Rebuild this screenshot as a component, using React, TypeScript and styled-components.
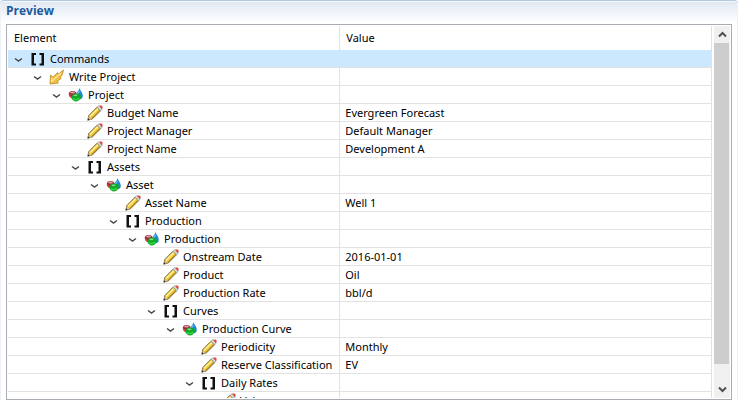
import React from 'react';
import styled, { createGlobalStyle } from 'styled-components';

const Global = createGlobalStyle`
  * { box-sizing: border-box; }
  body { margin: 0; background: #fff; color: #000; font: 11px/18px "Noto Sans", "Open Sans", sans-serif; }
`;

const Panel = styled.section`
  display: flex;
  flex-direction: column;
  height: 100vh;
  padding: 0 6px;
  border-top: 1px solid #b4c8e0;
  border-radius: 4px 4px 0 0;
  background: linear-gradient(#dfe8f2, #fff 22px);
  box-shadow: inset 1px 0 #eef2f7, inset -1px 0 #eef2f7, inset 0 1px #f5f9ff;
`;

const Title = styled.h2`
  margin: 0;
  padding-top: 1px;
  height: 23px;
  font-family: "Open Sans", sans-serif;
  font-size: 12px;
  line-height: 18px;
  font-weight: 700;
  color: #1c5a9c;
`;

const Viewer = styled.div`
  display: flex;
  flex: 1;
  min-height: 0;
  padding: 1px;
  border: 1px solid #a9acb2;
  background: #fff;
`;

const Viewport = styled.div`
  flex: 1;
  min-width: 0;
  padding-right: 2px;
  overflow: hidden;
`;

const Table = styled.table`
  width: 100%;
  table-layout: fixed;
  border-collapse: separate;
  border-spacing: 0;
`;

const ElementCol = styled.col`
  width: 47.2%;
`;

const HeadCell = styled.th`
  height: 24px;
  padding: 0 6px;
  border-right: 1px solid #e2e2e2;
  font-weight: 400;
  text-align: left;
`;

const Row = styled.tr<{ $selected: boolean }>`
  background: ${(p) => (p.$selected ? '#cce8ff' : '#fff')};
`;

const Cell = styled.td`
  height: 18px;
  padding: 0 5px;
  border-right: 1px solid #e2e2e2;
  border-bottom: 1px solid #e2e2e2;
  line-height: 17px;
  white-space: nowrap;
`;

const Node = styled.div<{ $level: number }>`
  display: flex;
  align-items: center;
  height: 17px;
  padding-left: ${(p) => p.$level * 19}px;
`;

const Toggle = styled.button`
  display: flex;
  flex: none;
  align-items: center;
  justify-content: center;
  width: 11px;
  height: 17px;
  padding: 2px 0 0;
  border: 0;
  background: none;
`;

const Spacer = styled.span`
  flex: none;
  width: 11px;
`;

const Icon = styled.svg`
  flex: none;
  width: 16px;
  height: 16px;
  margin: 0 4px 0 6px;
`;

const Scrollbar = styled.div`
  display: flex;
  flex-direction: column;
  width: 16px;
  background: #f0f0f0;
`;

const Arrow = styled.button`
  display: flex;
  align-items: center;
  justify-content: center;
  height: 17px;
  padding: 0;
  border: 0;
  background: #f0f0f0;
`;

const Track = styled.div`
  flex: 1;
`;

const Thumb = styled.div`
  width: 15px;
  height: 95%;
  background: #cdcdcd;
`;

type Kind = 'list' | 'write' | 'object' | 'field';
type Item = { level: number; kind: Kind; name: string; value?: string };

const items: Item[] = [
  { level: 0, kind: 'list', name: 'Commands' },
  { level: 1, kind: 'write', name: 'Write Project' },
  { level: 2, kind: 'object', name: 'Project' },
  { level: 3, kind: 'field', name: 'Budget Name', value: 'Evergreen Forecast' },
  { level: 3, kind: 'field', name: 'Project Manager', value: 'Default Manager' },
  { level: 3, kind: 'field', name: 'Project Name', value: 'Development A' },
  { level: 3, kind: 'list', name: 'Assets' },
  { level: 4, kind: 'object', name: 'Asset' },
  { level: 5, kind: 'field', name: 'Asset Name', value: 'Well 1' },
  { level: 5, kind: 'list', name: 'Production' },
  { level: 6, kind: 'object', name: 'Production' },
  { level: 7, kind: 'field', name: 'Onstream Date', value: '2016-01-01' },
  { level: 7, kind: 'field', name: 'Product', value: 'Oil' },
  { level: 7, kind: 'field', name: 'Production Rate', value: 'bbl/d' },
  { level: 7, kind: 'list', name: 'Curves' },
  { level: 8, kind: 'object', name: 'Production Curve' },
  { level: 9, kind: 'field', name: 'Periodicity', value: 'Monthly' },
  { level: 9, kind: 'field', name: 'Reserve Classification', value: 'EV' },
  { level: 9, kind: 'list', name: 'Daily Rates' },
  { level: 10, kind: 'field', name: 'Values' },
];

function KindIcon({ kind }: { kind: Kind }) {
  if (kind === 'list') {
    return (
      <Icon viewBox="0 0 16 16" fill="#111" aria-hidden="true">
        <path d="M1.500 2H6v2H4v8.500h2v2H1.500zM14 2H9.500v2h2v8.500h-2v2H14z" />
      </Icon>
    );
  }
  if (kind === 'write') {
    return (
      <Icon viewBox="0 0 16 16" aria-hidden="true">
        <path
          d="M1 15 1.500 6 4 8.200 8.500 3.500 9 5.500 14.500 1 13 6.500 11.500 7.500 12 9.500 8 12.500 9.500 14z"
          fill="#f2c040"
          stroke="#b98526"
          strokeWidth=".8"
          strokeLinejoin="round"
        />
        <path d="m2.500 13 .3-4.500M3.500 12 8 7.500l4.500-3.500" fill="none" stroke="#ffe794" strokeWidth="1.300" />
      </Icon>
    );
  }
  if (kind === 'object') {
    return (
      <Icon viewBox="0 0 16 16" aria-hidden="true">
        <path d="M11.500 1c.5 2.500 3.500 4.500 3.300 8C14.600 12 12.500 12.500 11 12S7.500 10 8 7.500 11 4 11.500 1z" fill="#2289d8" />
        <path d="M11.300 4c0 1.500-1.800 2-2.300 3.500" fill="none" stroke="#7cc6f5" strokeWidth="1.100" />
        <path d="M.8 6.500C1 4.500 3 4 5 4s3.500 1 3.500 3L6 11.500C3 11.500.5 9.500.8 6.500z" fill="#a52a35" />
        <ellipse cx="4.500" cy="5.500" rx="2.400" ry=".9" fill="#e3a3aa" />
        <path d="M1.200 7.500c.6 1.500 1.600 2.500 3 3" fill="none" stroke="#e0484c" strokeWidth="1.200" />
        <path d="M3.500 9.500C4 7.500 6 6.500 8.500 6.500S13 7.500 13 9.500 10.500 14.500 8 14.500s-4.900-2.500-4.500-5z" fill="#12a727" />
        <ellipse cx="7.500" cy="8.300" rx="2" ry=".9" fill="#7fdc88" />
        <path d="M5 11.500c2 1.800 4.500 1.300 6-.5" fill="none" stroke="#2de03b" strokeWidth="1.500" />
      </Icon>
    );
  }
  return (
    <Icon viewBox="0 0 16 16" aria-hidden="true">
      <path d="M.8 15.200 1.800 10.500 10 2.200l3.600 3.500L5.300 14z" fill="#ecc83a" stroke="#5d4a20" strokeWidth=".8" strokeLinejoin="round" />
      <path d="m3 11.500 7.800-7.800" stroke="#fff19a" strokeWidth="1.500" />
      <path d="m5 13 7.800-7.800" stroke="#c39422" strokeWidth="1" />
      <path d="M.8 15.200 1.800 11.500l2.700 2.700z" fill="#d9bd96" />
      <path d="m.7 15.300.5-2 1.500 1.500z" fill="#222" />
      <path d="m10 2.200 1.500-1.500 3.700 3.500-1.600 1.500z" fill="#d6dbe2" stroke="#868b94" strokeWidth=".6" />
      <path d="M12 .5h2.500l1 1v2.200l-1 .3z" fill="#e2483c" />
    </Icon>
  );
}

export default function App() {
  return (
    <>
      <Global />
      <Panel>
        <Title>Preview</Title>
        <Viewer>
          <Viewport>
            <Table>
              <colgroup>
                <ElementCol />
                <col />
              </colgroup>
              <thead>
                <tr>
                  <HeadCell scope="col">Element</HeadCell>
                  <HeadCell scope="col">Value</HeadCell>
                </tr>
              </thead>
              <tbody>
                {items.map((item, i) => (
                  <Row key={i} $selected={i === 0}>
                    <Cell>
                      <Node $level={item.level}>
                        {item.kind === 'field' ? (
                          <Spacer />
                        ) : (
                          <Toggle aria-label={`Collapse ${item.name}`} aria-expanded>
                            <svg width="9" height="6" viewBox="0 0 9 6" fill="none" aria-hidden="true">
                              <path d="m1 1.500 3.500 2.500 3.500-2.500" stroke="#484848" strokeWidth="1.500" />
                            </svg>
                          </Toggle>
                        )}
                        <KindIcon kind={item.kind} />
                        <span>{item.name}</span>
                      </Node>
                    </Cell>
                    <Cell>{item.value}</Cell>
                  </Row>
                ))}
              </tbody>
            </Table>
          </Viewport>
          <Scrollbar>
            <Arrow aria-label="Scroll up">
              <svg width="9" height="7" viewBox="0 0 9 7" fill="none" aria-hidden="true">
                <path d="m1 5.500 3.500-3.500 3.500 3.500" stroke="#505050" strokeWidth="2" />
              </svg>
            </Arrow>
            <Track>
              <Thumb />
            </Track>
            <Arrow aria-label="Scroll down">
              <svg width="9" height="7" viewBox="0 0 9 7" fill="none" aria-hidden="true">
                <path d="m1 1.500 3.500 3.500 3.500-3.500" stroke="#505050" strokeWidth="2" />
              </svg>
            </Arrow>
          </Scrollbar>
        </Viewer>
      </Panel>
    </>
  );
}
